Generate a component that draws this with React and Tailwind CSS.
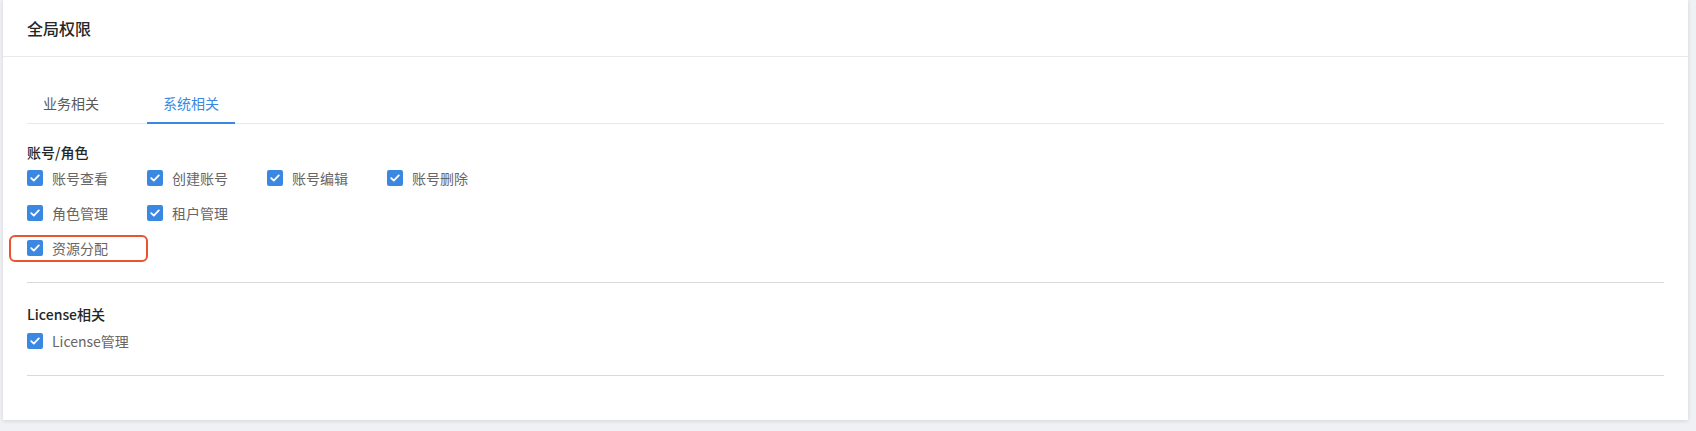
import React from "react";

const font = { fontFamily: '"Noto Sans CJK SC", "Noto Sans", sans-serif' };

function Check({ label, highlight }) {
  return (
    <div className="relative flex h-[24px] w-[120px] items-center">
      <span className="flex h-[16px] w-[16px] shrink-0 items-center justify-center rounded-[2px] bg-[#3a88e2]">
        <svg width="10" height="8" viewBox="0 0 10 8" fill="none">
          <path d="M1.2 4.1 L3.8 6.6 L8.8 1.4" stroke="white" strokeWidth="1.8" strokeLinecap="round" strokeLinejoin="round" />
        </svg>
      </span>
      <span className="ml-[9px] whitespace-nowrap text-[14px] leading-[22px] text-[#666666]">{label}</span>
      {highlight && (
        <span className="pointer-events-none absolute left-[-18px] top-[-1px] h-[27px] w-[139px] rounded-[6px] border-2 border-[#e9532e]" />
      )}
    </div>
  );
}

export default function App() {
  return (
    <div className="min-h-[431px] w-full bg-[#eff1f5] pl-[3px] pr-[8px] pb-[9px]" style={font}>
      <div className="bg-white shadow-[0_1px_4px_rgba(0,0,0,0.12)]">
        <div className="flex h-[57px] items-center border-b border-[#e8e8e8] px-6">
          <span className="text-[16px] font-medium leading-[24px] text-[#262626]">全局权限</span>
        </div>
        <div className="px-6 pt-6 pb-[44px]">
          <div className="flex border-b border-[#e8e8e8]">
            <div className="mb-[-1px] mr-8 border-b-2 border-transparent px-4 pt-[13px] pb-[10px] text-[14px] leading-[18px] text-[#595959]">
              业务相关
            </div>
            <div className="mb-[-1px] border-b-2 border-[#3a88e2] px-4 pt-[13px] pb-[10px] text-[14px] leading-[18px] text-[#3a88e2]">
              系统相关
            </div>
          </div>

          <div className="mt-[17px] text-[14px] font-medium leading-[22px] text-[#262626]">账号/角色</div>
          <div className="mt-[3px] flex flex-col gap-[11px]">
            <div className="flex">
              <Check label="账号查看" />
              <Check label="创建账号" />
              <Check label="账号编辑" />
              <Check label="账号删除" />
            </div>
            <div className="flex">
              <Check label="角色管理" />
              <Check label="租户管理" />
            </div>
            <div className="flex">
              <Check label="资源分配" highlight />
            </div>
          </div>
          <div className="mt-[22px] border-t border-[#d9d9d9]" />

          <div className="mt-[20px] text-[14px] font-medium leading-[22px] text-[#262626]">License相关</div>
          <div className="mt-[4px] flex">
            <Check label="License管理" />
          </div>
          <div className="mt-[22px] border-t border-[#d9d9d9]" />
        </div>
      </div>
    </div>
  );
}
